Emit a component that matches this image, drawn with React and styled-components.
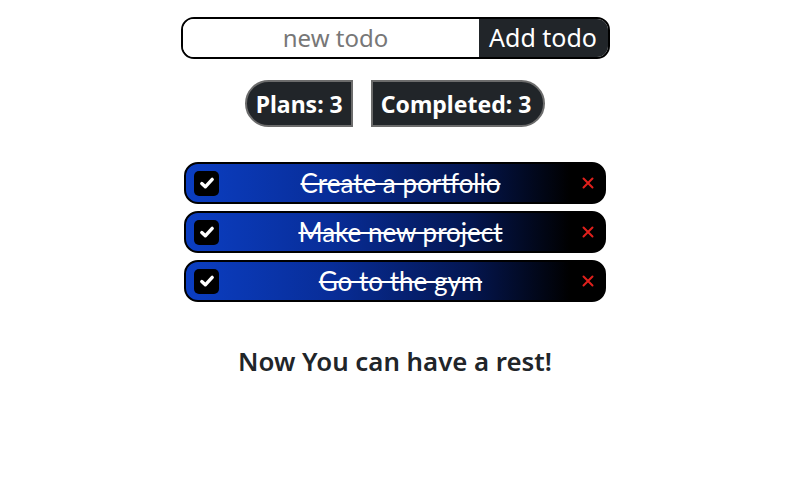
import React, { useState } from 'react';
import styled, { createGlobalStyle } from 'styled-components';

const GlobalStyle = createGlobalStyle`
  body {
    margin: 0;
    background: #ffffff;
    font-family: 'Noto Sans', 'Open Sans', sans-serif;
    color: #212529;
  }
`;

const Page = styled.div`
  width: 790px;
  display: flex;
  flex-direction: column;
  align-items: center;
  padding-top: 17px;
`;

const InputGroup = styled.form`
  display: flex;
  width: 429px;
  height: 42px;
  box-sizing: border-box;
  border: 2px solid #000;
  border-radius: 13px;
  overflow: hidden;
`;

const TodoInput = styled.input`
  flex: 1;
  min-width: 0;
  border: none;
  outline: none;
  text-align: center;
  font-family: inherit;
  font-size: 24px;
  color: #212529;
  background: #fff;
  padding: 0 0 2px 10px;

  &::placeholder {
    color: #777;
  }
`;

const AddButton = styled.button`
  width: 129px;
  border: none;
  background: #212529;
  color: #fff;
  font-family: inherit;
  font-size: 25px;
  padding: 0 0 2px;
  cursor: pointer;
`;

const Counters = styled.div`
  display: flex;
  gap: 18px;
  margin-top: 21px;
`;

const Counter = styled.div`
  height: 47px;
  box-sizing: border-box;
  display: flex;
  align-items: center;
  padding-left: ${(p) => (p.$side === 'left' ? '9px' : '8px')};
  padding-right: ${(p) => (p.$side === 'left' ? '8px' : '12px')};
  background: #212529;
  border: 2px solid #6c6c6c;
  border-radius: ${(p) => (p.$side === 'left' ? '24px 0 0 24px' : '0 24px 24px 0')};
  color: #fff;
  font-size: 23px;
  font-weight: 700;
`;

const List = styled.ul`
  list-style: none;
  margin: 35px 0 0;
  padding: 0;
  display: flex;
  flex-direction: column;
  gap: 7px;
`;

const Item = styled.li`
  width: 422px;
  height: 42px;
  box-sizing: border-box;
  display: flex;
  align-items: center;
  padding: 0 10px 0 8px;
  border: 2px solid #000;
  border-radius: 14px;
  background: linear-gradient(90deg, #0b3ec2 0%, #082d98 35%, #041650 68%, #000000 92%);
  color: #fff;
`;

const Check = styled.button`
  width: 25px;
  height: 25px;
  flex: none;
  border: none;
  border-radius: 5px;
  background: #000;
  display: flex;
  align-items: center;
  justify-content: center;
  padding: 0;
  cursor: pointer;
`;

const Title = styled.span`
  flex: 1;
  text-align: center;
  font-family: 'Lato', 'Noto Sans', sans-serif;
  font-size: 26px;
  text-decoration: ${(p) => (p.$done ? 'line-through' : 'none')};
  text-decoration-thickness: 2px;
`;

const Remove = styled.button`
  border: none;
  background: none;
  padding: 0;
  cursor: pointer;
  display: flex;
`;

const Message = styled.h2`
  margin: 41px 0 0;
  font-size: 25.8px;
  font-weight: 600;
  color: #212529;
`;

const CheckIcon = () => (
  <svg width="16" height="16" viewBox="0 0 16 16">
    <path d="M2.8 8.6 L6.3 11.8 L13.2 4.4" fill="none" stroke="#fff" strokeWidth="3.4" strokeLinecap="round" strokeLinejoin="round" />
  </svg>
);

const CrossIcon = () => (
  <svg width="12" height="12" viewBox="0 0 12 12">
    <path d="M1.5 1.5 L10.5 10.5 M10.5 1.5 L1.5 10.5" stroke="#e0201c" strokeWidth="2" strokeLinecap="round" />
  </svg>
);

export default function App() {
  const [todos] = useState([
    { id: 1, title: 'Create a portfolio', done: true },
    { id: 2, title: 'Make new project', done: true },
    { id: 3, title: 'Go to the gym', done: true },
  ]);
  const completed = todos.filter((t) => t.done).length;

  return (
    <>
      <GlobalStyle />
      <Page>
        <InputGroup onSubmit={(e) => e.preventDefault()}>
          <TodoInput placeholder="new todo" />
          <AddButton type="submit">Add todo</AddButton>
        </InputGroup>
        <Counters>
          <Counter $side="left">Plans: {todos.length}</Counter>
          <Counter $side="right">Completed: {completed}</Counter>
        </Counters>
        <List>
          {todos.map((t) => (
            <Item key={t.id}>
              <Check>{t.done && <CheckIcon />}</Check>
              <Title $done={t.done}>{t.title}</Title>
              <Remove>
                <CrossIcon />
              </Remove>
            </Item>
          ))}
        </List>
        {completed === todos.length && <Message>Now You can have a rest!</Message>}
      </Page>
    </>
  );
}
